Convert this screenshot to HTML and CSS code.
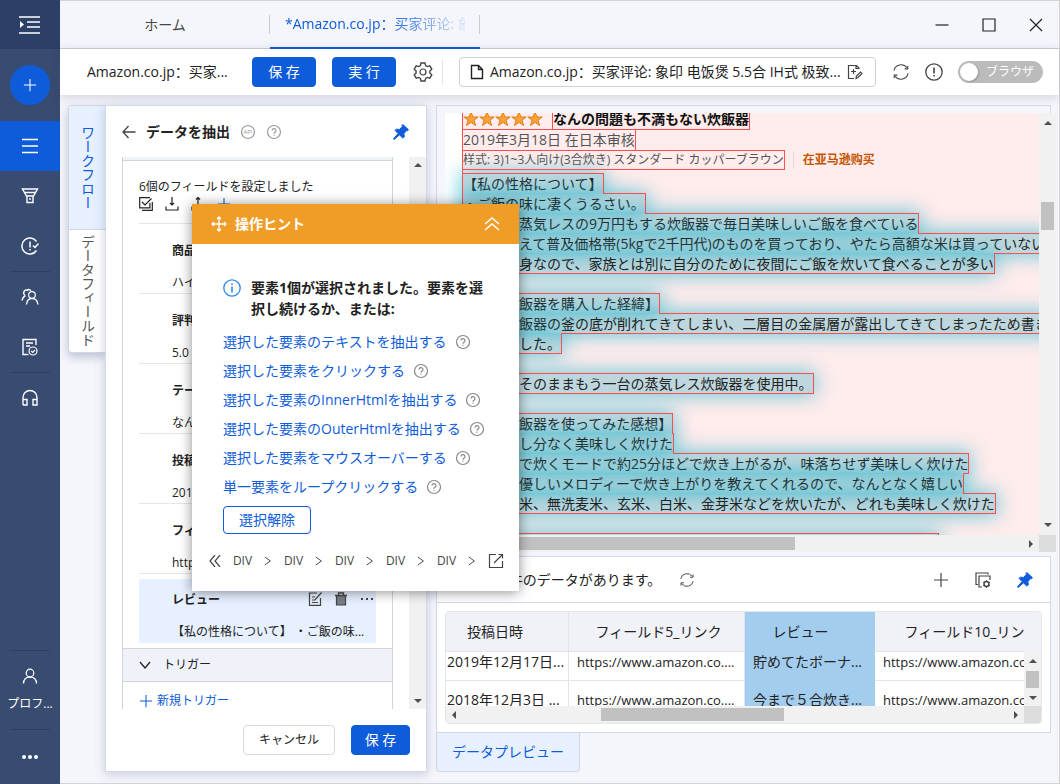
FILE: index.html
```html
<!DOCTYPE html>
<html lang="ja">
<head>
    <meta charset="UTF-8">
    <meta name="viewport" content="width=device-width, initial-scale=1.0">
    <title>データを抽出</title>
    <link rel="stylesheet" href="styles.css">
</head>
<body>
    <!-- アイコン -->
    <svg class="sprite" aria-hidden="true">
        <symbol id="i-plus" viewBox="0 0 16 16"><path d="M8 1v14M1 8h14"/></symbol>
        <symbol id="i-help" viewBox="0 0 16 16"><circle cx="8" cy="8" r="6.5"/><path d="M6 6.6a2 2 0 1 1 3 1.7c-.7.4-1 .7-1 1.4M8 10.8v1"/></symbol>
        <symbol id="i-refresh" viewBox="0 0 20 20"><path d="M2.2 8.500A8 8 0 0 1 16.500 5.300M17.800 11.500A8 8 0 0 1 3.500 14.700M17.500 3v3.500h-3.500M2.500 17v-3.500H6"/></symbol>
        <symbol id="i-pin" viewBox="0 0 16 16"><path d="M9.800.5l5.700 5.200-.9 1-1-.2-2.700 3 .4 3.300-1.500 1.300-3.300-3.200L1 15.500l-.6-.6 4.700-5.400L2 6.300l1.500-1.100 3.200.2 2.600-2.900-.3-1z" stroke-width="1"/></symbol>
        <symbol id="i-gt" viewBox="0 0 10 12"><path d="M1 1l7 5-7 5"/></symbol>
    </svg>

    <div class="app">
        <aside class="sidebar">
            <button class="side-top" aria-label="メニュー">
                <svg class="icon" width="22" height="18" viewBox="0 0 22 18"><path d="M0 1h21M8 6h13M8 11h13M0 17h21" stroke-width="1.600"/><path d="M1 5l4 3.500-4 3.500z" fill="currentColor" stroke="none"/></svg>
            </button>
            <button class="side-new" aria-label="新規"><svg class="icon" width="14" height="14"><use href="#i-plus"/></svg></button>
            <button class="side-item active" aria-label="タスク">
                <svg class="icon" width="16" height="16" viewBox="0 0 16 16"><path d="M0 1.500h16M0 8h16M0 14.500h16" stroke-width="1.500"/></svg>
            </button>
            <button class="side-item" aria-label="フィルター">
                <svg class="icon" width="18" height="18" viewBox="0 0 18 18"><path d="M1.500 2h15l-4 7h-7zM3.500 5.500h11M6 9v6.500h6V9M9 11v2" stroke-width="1.400"/></svg>
            </button>
            <button class="side-item" aria-label="スケジュール">
                <svg class="icon" width="18" height="18" viewBox="0 0 18 18"><path d="M15.500 4.500A8 8 0 1 0 15.500 13.500M9 4.500v6M9 12v1.500M12 8.500l2 2 3.500-4" stroke-width="1.500"/></svg>
            </button>
            <hr>
            <button class="side-item" aria-label="チーム">
                <svg class="icon" width="18" height="18" viewBox="0 0 18 18"><circle cx="11" cy="7" r="3.300"/><path d="M5.500 16.500c.3-4 2.500-6 5.500-6s5.500 2 6 6M7.500 2.500a3 3 0 1 0-3.500 5M1 12.500c.5-2.500 1.500-4 3.500-5M6 1.800c1.500-.8 3-.3 4 1" stroke-width="1.400"/></svg>
            </button>
            <button class="side-item" aria-label="テンプレート">
                <svg class="icon" width="18" height="18" viewBox="0 0 18 18"><path d="M15 7V1.500H2v15h5.500M5 5h7M5 8h4" stroke-width="1.400"/><circle cx="12" cy="13" r="4"/><path d="M10.200 13l1.500 1.500 2.300-2.500"/></svg>
            </button>
            <hr>
            <button class="side-item" aria-label="サポート">
                <svg class="icon" width="18" height="18" viewBox="0 0 18 18"><path d="M2 16V8.500a7 7 0 0 1 14 0V16h-4v-5.500h4M2 10.500h4V16H2" stroke-width="1.400"/></svg>
            </button>
            <div class="side-bottom">
                <hr>
                <button class="side-profile">
                    <svg class="icon" width="16" height="16" viewBox="0 0 16 16"><circle cx="8" cy="5" r="3.800"/><path d="M1.500 15.500c0-4 2.700-6.500 6.500-6.500s6.500 2.500 6.500 6.500" stroke-width="1.400"/></svg>
                    <span>プロフ...</span>
                </button>
                <hr>
                <button class="side-more" aria-label="その他"><svg width="16" height="4" viewBox="0 0 16 4" fill="#fff"><circle cx="2" cy="2" r="2"/><circle cx="8" cy="2" r="2"/><circle cx="14" cy="2" r="2"/></svg></button>
            </div>
        </aside>

        <div class="main">
            <!-- タブ -->
            <header class="tabbar">
                <a class="tab" href="#home">ホーム</a>
                <a class="tab active" href="#task"><span lang="zh-CN">*Amazon.co.jp：买家评论: 象</span></a>
                <div class="window-buttons">
                    <button aria-label="最小化"><svg class="icon" width="14" height="14" viewBox="0 0 14 14"><path d="M.5 7h13"/></svg></button>
                    <button aria-label="最大化"><svg class="icon" width="14" height="14" viewBox="0 0 14 14"><path d="M1 1h12v12H1z"/></svg></button>
                    <button aria-label="閉じる"><svg class="icon" width="14" height="14" viewBox="0 0 14 14"><path d="M1 1l12 12M13 1L1 13"/></svg></button>
                </div>
            </header>

            <!-- ツールバー -->
            <div class="toolbar">
                <span class="task-name" lang="zh-CN">Amazon.co.jp：买家...</span>
                <button class="btn primary">保 存</button>
                <button class="btn primary">実 行</button>
                <button class="icon-btn settings" aria-label="設定">
                    <svg class="icon" width="20" height="20" viewBox="0 0 20 20"><path d="M8 1h4l.6 2.600 1.700 1 2.500-.8 2 3.400-1.900 1.800v2l1.900 1.800-2 3.400-2.500-.8-1.700 1L12 19H8l-.6-2.600-1.700-1-2.500.8-2-3.400L3.100 11V9L1.200 7.200l2-3.400 2.500.8 1.700-1z" stroke-width="1.400"/><circle cx="10" cy="10" r="3"/></svg>
                </button>
                <div class="address">
                    <svg class="icon" width="14" height="16" viewBox="0 0 14 16"><path d="M1.500 1.500h7l4 4v9h-11zM8.500 1.500v4h4" stroke-width="1.400"/></svg>
                    <input type="text" lang="zh-CN" aria-label="アドレス" value="Amazon.co.jp：买家评论: 象印 电饭煲 5.5合 IH式 极致..." readonly>
                    <button class="icon-btn" aria-label="編集"><svg class="icon" width="16" height="16" viewBox="0 0 16 16"><path d="M12 5V4L9.500 1.500H1.500v13H7M9 1.500V4.500h3M4 7.500h5M6.500 5v5M9 14.500l.5-2.500 4-4 1.500 1.500-4 4z"/></svg></button>
                </div>
                <button class="icon-btn" aria-label="更新"><svg class="icon" width="18" height="18"><use href="#i-refresh"/></svg></button>
                <button class="icon-btn" aria-label="情報"><svg class="icon" width="18" height="18" viewBox="0 0 18 18"><circle cx="9" cy="9" r="8.200" stroke-width="1.300"/><path d="M9 4.500v6M9 12v1.600" stroke-width="1.600"/></svg></button>
                <label class="switch"><input type="checkbox">ブラウザ</label>
            </div>

            <div class="workspace">
                <nav class="vtabs">
                    <button class="active">ワークフロー</button>
                    <button>データフィールド</button>
                </nav>

                <!-- データ抽出パネル -->
                <section class="panel">
                    <div class="panel-head">
                        <button class="icon-btn" aria-label="戻る"><svg class="icon" width="14" height="14" viewBox="0 0 14 14"><path d="M13.500 7H1M6.500 1L1 7l5.500 6" stroke-width="1.300"/></svg></button>
                        <h2>データを抽出</h2>
                        <svg class="icon gray api" width="16" height="16" viewBox="0 0 16 16"><circle cx="8" cy="8" r="6.500"/><text x="8" y="10" text-anchor="middle">API</text></svg>
                        <svg class="icon gray" width="16" height="16"><use href="#i-help"/></svg>
                        <button class="icon-btn pin" aria-label="固定"><svg width="16" height="16"><use href="#i-pin"/></svg></button>
                    </div>
                    <div class="panel-body">
                        <div class="fields">
                            <div class="fields-inner">
                                <p>6個のフィールドを設定しました</p>
                                <div class="field-tools">
                                    <svg class="icon" width="14" height="14" viewBox="0 0 14 14"><path d="M11 .7H.7v10.200h10.200V6M3 5l3 3 6.500-6.500M3 13.300h10.300V5"/></svg>
                                    <svg class="icon" width="14" height="14" viewBox="0 0 14 14"><path d="M7 0v8M5 6l2 2 2-2M1 9.500V13h12V9.500"/></svg>
                                    <svg class="icon" width="14" height="14" viewBox="0 0 14 14"><path d="M7 9V0M5 2.500l2-2 2 2M1 9.500V13h12V9.500"/></svg>
                                    <svg class="icon blue" width="14" height="14"><use href="#i-plus"/></svg>
                                </div>
                                <div class="field"><b>商品名</b><span>ハイアール</span></div>
                                <div class="field"><b>評判</b><span>5.0 星</span></div>
                                <div class="field"><b>テーマ</b><span>なんの問題も</span></div>
                                <div class="field"><b>投稿日時</b><span>2019年3月18日</span></div>
                                <div class="field"><b>フィールド5_リンク</b><span>https://www.amazon.co.jp</span></div>
                                <div class="field selected">
                                    <b>レビュー</b>
                                    <div class="field-actions">
                                        <button class="icon-btn" aria-label="編集"><svg class="icon" width="14" height="14" viewBox="0 0 14 14"><path d="M9 1H1.500v12.300h11V6M4 8l3 0 6.500-7.500M4 5h3M4 10.500h6"/></svg></button>
                                        <button class="icon-btn" aria-label="削除"><svg class="icon" width="14" height="14" viewBox="0 0 14 14"><path d="M2.500 3.500h9V13h-9z" fill="#778089"/><path d="M1 3.500h12M4.500 3.500V1h5v2.500" stroke-width="1.300"/></svg></button>
                                        <button class="icon-btn" aria-label="その他"><svg width="14" height="4" viewBox="0 0 14 4" fill="#444"><path d="M1 1h2v2H1zM6 1h2v2H6zM11 1h2v2h-2z"/></svg></button>
                                    </div>
                                    <span>【私の性格について】 ・ご飯の味...</span>
                                </div>
                            </div>
                            <button class="trigger-head"><svg class="icon" width="12" height="8" viewBox="0 0 12 8"><path d="M1 1l5 6 5-6" stroke-width="1.300"/></svg>トリガー</button>
                            <a class="trigger-add" href="#trigger"><svg class="icon" width="14" height="14"><use href="#i-plus"/></svg>新規トリガー</a>
                        </div>
                        <div class="vscroll"><i class="up"></i><i class="down"></i></div>
                    </div>
                    <div class="panel-foot">
                        <button class="btn">キャンセル</button>
                        <button class="btn primary">保 存</button>
                    </div>
                </section>

                <div class="content">
                    <!-- ブラウザ -->
                    <section class="browser">
                        <div class="browser-view">
                            <div class="page">
                                <div class="review">
                                    <div class="review-title">
                                        <svg width="80" height="16" viewBox="0 0 80 16" fill="#ffa033" stroke="#d98328"><defs><path id="star" d="M8 1l2 5h5.200l-4.200 3.300 1.600 5.200L8 11.400l-4.600 3.100L5 9.300.8 6H6z"/></defs><use href="#star"/><use href="#star" x="16"/><use href="#star" x="32"/><use href="#star" x="48"/><use href="#star" x="64"/></svg>
                                        <b class="mark">なんの問題も不満もない炊飯器</b>
                                    </div>
                                    <div class="review-date"><span class="mark">2019年3月18日 在日本审核</span></div>
                                    <div class="review-meta"><span class="mark">样式: 3)1~3人向け(3合炊き) スタンダード カッパーブラウン</span><a href="#buy" lang="zh-CN">在亚马逊购买</a></div>
                                    <div class="review-body"><span class="outlined"><span class="glow">【私の性格について】<br>・ご飯の味に凄くうるさい。<br>・現在は蒸気レスの9万円もする炊飯器で毎日美味しいご飯を食べている<br>それに加えて普及価格帯(5kgで2千円代)のものを買っており、やたら高額な米は買っていない。<br>・私は単身なので、家族とは別に自分のために夜間にご飯を炊いて食べることが多い<br><br>【私が炊飯器を購入した経緯】<br>今まで炊飯器の釜の底が削れてきてしまい、二層目の金属層が露出してきてしまったため書き込み<br>を行いました。<br><br>現在は、そのままもう一台の蒸気レス炊飯器を使用中。<br><br>【この炊飯器を使ってみた感想】<br>・味は申し分なく美味しく炊けた<br>・お急ぎで炊くモードで約25分ほどで炊き上がるが、味落ちせず美味しく炊けた<br>・音色が優しいメロディーで炊き上がりを教えてくれるので、なんとなく嬉しい<br>・無洗精米、無洗麦米、玄米、白米、金芽米などを炊いたが、どれも美味しく炊けた<br><br>・お手入れする部品が少なく、毎日の片付けもとても簡単なのが気に入った</span></span></div>
                                </div>
                            </div>
                            <div class="vscroll"><i class="up"></i><div class="thumb"></div><i class="down"></i></div>
                            <div class="hscroll"><i class="left"></i><div class="thumb"></div><i class="right"></i></div>
                            <div class="corner"></div>
                        </div>
                    </section>

                    <!-- データプレビュー -->
                    <section class="preview">
                        <div class="preview-head">
                            <span>合計 100件のデータがあります。</span>
                            <button class="icon-btn" aria-label="更新"><svg class="icon" width="16" height="16"><use href="#i-refresh"/></svg></button>
                            <div class="preview-actions">
                                <button class="icon-btn" aria-label="追加"><svg class="icon" width="16" height="16"><use href="#i-plus"/></svg></button>
                                <button class="icon-btn" aria-label="列の設定"><svg class="icon" width="16" height="16" viewBox="0 0 16 16"><path d="M3 12.500H1V1h12v1.500M7 15H4V4h11v4"/><circle cx="11.500" cy="12" r="2.500" stroke-width="1.400"/><path d="M11.500 8.300v1.200M11.500 14.500v1.200M8.300 10.200l1 .6M13.700 13.200l1 .6M8.300 13.800l1-.6M13.700 10.800l1-.6"/></svg></button>
                                <button class="icon-btn pin" aria-label="固定"><svg width="16" height="16"><use href="#i-pin"/></svg></button>
                            </div>
                        </div>
                        <div class="grid">
                            <div class="grid-clip">
                                <table>
                                    <thead>
                                        <tr><th>投稿日時</th><th>フィールド5_リンク</th><th class="on">レビュー</th><th>フィールド10_リンク</th></tr>
                                    </thead>
                                    <tbody>
                                        <tr><td>2019年12月17日...</td><td class="url">https://www.amazon.co....</td><td class="on">貯めてたボーナ...</td><td class="url">https://www.amazon.co....</td></tr>
                                        <tr><td>2018年12月3日 ...</td><td class="url">https://www.amazon.co....</td><td class="on">今まで５合炊き...</td><td class="url">https://www.amazon.co....</td></tr>
                                    </tbody>
                                </table>
                            </div>
                            <div class="vscroll"><i class="up"></i><div class="thumb"></div><i class="down"></i></div>
                            <div class="hscroll"><i class="left"></i><div class="thumb"></div><i class="right"></i></div>
                            <div class="corner"></div>
                        </div>
                    </section>
                    <button class="preview-tab">データプレビュー</button>
                </div>
            </div>
        </div>

        <!-- 操作ヒント -->
        <div class="hint">
            <div class="hint-head">
                <svg class="icon" width="16" height="16" viewBox="0 0 16 16"><path d="M8 1v14M1 8h14M6 3l2-2 2 2M6 13l2 2 2-2M3 6L1 8l2 2M13 6l2 2-2 2" stroke-width="1.300"/></svg>
                <b>操作ヒント</b>
                <button class="icon-btn" aria-label="折りたたむ"><svg class="icon" width="16" height="14" viewBox="0 0 16 14"><path d="M1 7l7-6 7 6M1 13l7-6 7 6" stroke-width="1.500"/></svg></button>
            </div>
            <div class="hint-body">
                <div class="hint-title">
                    <svg class="icon" width="18" height="18" viewBox="0 0 18 18"><circle cx="9" cy="9" r="8.200" stroke-width="1.300"/><path d="M9 4.500V6M9 7.500v6" stroke-width="1.600"/></svg>
                    <b>要素1個が選択されました。要素を選択し続けるか、または:</b>
                </div>
                <ul>
                    <li><a href="#text">選択した要素のテキストを抽出する</a><svg class="icon" width="16" height="16"><use href="#i-help"/></svg></li>
                    <li><a href="#click">選択した要素をクリックする</a><svg class="icon" width="16" height="16"><use href="#i-help"/></svg></li>
                    <li><a href="#inner">選択した要素のInnerHtmlを抽出する</a><svg class="icon" width="16" height="16"><use href="#i-help"/></svg></li>
                    <li><a href="#outer">選択した要素のOuterHtmlを抽出する</a><svg class="icon" width="16" height="16"><use href="#i-help"/></svg></li>
                    <li><a href="#hover">選択した要素をマウスオーバーする</a><svg class="icon" width="16" height="16"><use href="#i-help"/></svg></li>
                    <li><a href="#loop">単一要素をループクリックする</a><svg class="icon" width="16" height="16"><use href="#i-help"/></svg></li>
                </ul>
                <button class="btn outline">選択解除</button>
            </div>
            <div class="hint-path">
                <svg class="icon" width="12" height="12" viewBox="0 0 12 12"><path d="M6 0L1 6l5 6M11 0L6 6l5 6" stroke-width="1.200"/></svg>
                <span>DIV</span><svg class="icon" width="8" height="12"><use href="#i-gt"/></svg>
                <span>DIV</span><svg class="icon" width="8" height="12"><use href="#i-gt"/></svg>
                <span>DIV</span><svg class="icon" width="8" height="12"><use href="#i-gt"/></svg>
                <span>DIV</span><svg class="icon" width="8" height="12"><use href="#i-gt"/></svg>
                <span>DIV</span><svg class="icon" width="8" height="12"><use href="#i-gt"/></svg>
                <svg class="icon" width="16" height="16" viewBox="0 0 16 16"><path d="M8 1.500H1.500v13h13V8M6 10l8.500-8.500M10.500 1.500h4v4"/></svg>
            </div>
        </div>
    </div>
</body>
</html>
```

FILE: styles.css
```css
* {
    box-sizing: border-box;
}

body {
    margin: 0;
    font-family: "Open Sans", "Noto Sans CJK JP", "Noto Sans CJK SC", sans-serif;
    font-size: 14px;
    line-height: 20px;
    color: #222;
    background: #f5f6fc;
}

button,
input {
    font: inherit;
    color: inherit;
    padding: 0;
    border: none;
    background: none;
}

[lang="zh-CN"] {
    font-family: "Open Sans", "Noto Sans CJK SC", sans-serif;
}

button {
    cursor: pointer;
}

a {
    text-decoration: none;
}

h2,
p,
ul {
    margin: 0;
    padding: 0;
    font-size: 14px;
    list-style: none;
}

.sprite {
    position: absolute;
    width: 0;
    height: 0;
}

.icon {
    flex: none;
    fill: none;
    stroke: currentColor;
    stroke-width: 1.2;
    display: block;
}

.icon-btn {
    display: flex;
    align-items: center;
    justify-content: center;
    color: #444;
}

.pin {
    fill: #0f5cdb;
    stroke: #0f5cdb;
}

.gray {
    color: #999;
}

.api text {
    font-size: 6px;
    fill: #999;
    stroke: none;
}

.btn {
    height: 30px;
    padding: 0 15px;
    border-radius: 4px;
    border: 1px solid #d9d9d9;
    background: #fff;
    white-space: nowrap;
}

.btn.primary {
    background: #0f5cdb;
    border-color: #0f5cdb;
    color: #fff;
}

.btn.outline {
    height: 28px;
    border-color: #0f5cdb;
    color: #0f5cdb;
}

.app {
    position: relative;
    display: flex;
    min-height: 100vh;
}

/* サイドバー */
.sidebar {
    flex: none;
    width: 60px;
    display: flex;
    flex-direction: column;
    background: #384b70;
    color: #fff;
}

.sidebar button {
    display: flex;
    align-items: center;
    justify-content: center;
}

.sidebar hr {
    width: 40px;
    margin: 0 auto;
    border: none;
    border-top: 1px solid #2c3f68;
}

.sidebar .side-top {
    height: 49px;
    background: #2c3f68;
}

.sidebar .side-new {
    width: 40px;
    height: 40px;
    margin: 16px auto;
    border-radius: 50%;
    background: #0f5cdb;
}

.side-item {
    height: 50px;
}

.side-item.active {
    background: #0f5cdb;
}

.side-bottom {
    margin-top: auto;
    font-size: 12px;
}

.side-profile {
    width: 60px;
    height: 78px;
    padding-top: 2px;
    flex-direction: column;
    gap: 10px;
}

.side-more {
    width: 60px;
    height: 54px;
}

/* メイン */
.main {
    flex: 1;
    min-width: 0;
    display: flex;
    flex-direction: column;
    border: 1px solid #d4d4d6;
    border-left: none;
}

.tabbar {
    height: 48px;
    display: flex;
    align-items: center;
    border-bottom: 1px solid #cfcfd2;
}

.tab {
    width: 210px;
    height: 47px;
    display: flex;
    align-items: center;
    justify-content: center;
    color: #444;
    background: linear-gradient(#ccc, #ccc) no-repeat right 14px / 1px 19px;
}

.tab.active {
    height: 48px;
    border-bottom: 2px solid #0f5cdb;
    color: #0f5cdb;
}

.tab span {
    width: 180px;
    overflow: hidden;
    white-space: nowrap;
    -webkit-mask-image: linear-gradient(to right, #000 55%, transparent 105%);
    mask-image: linear-gradient(to right, #000 55%, transparent 105%);
}

.window-buttons {
    margin-left: auto;
    display: flex;
    gap: 33px;
    padding-right: 16px;
}

.toolbar {
    position: relative;
    height: 46px;
    padding: 0 16px 0 27px;
    display: flex;
    align-items: center;
    background: #fff;
    box-shadow: 0 2px 10px rgba(60, 60, 90, 0.2);
}

.task-name {
    width: 165px;
    white-space: nowrap;
}

.toolbar .btn {
    width: 64px;
    margin-right: 16px;
}

.settings {
    padding: 2px 9px 2px 1px;
    margin-right: 16px;
    border-right: 1px solid #e4e4e8;
}

.address {
    flex: 1;
    height: 30px;
    padding: 0 12px 0 10px;
    margin-right: 16px;
    display: flex;
    align-items: center;
    gap: 6px;
    border: 1px solid #d0d0d4;
    border-radius: 4px;
}

.address input {
    flex: 1;
    min-width: 0;
    text-overflow: ellipsis;
    outline: none;
}

.toolbar > .icon-btn:not(.settings) {
    margin-right: 15px;
}

.switch {
    display: flex;
    align-items: center;
    width: 85px;
    height: 22px;
    border-radius: 11px;
    background: #bbb;
    color: #fff;
    font-size: 12px;
}

.switch input {
    appearance: none;
    width: 18px;
    height: 18px;
    margin: 0 8px 0 2px;
    border-radius: 50%;
    background: #fff;
    box-shadow: 1px 1px 2px rgba(0, 0, 0, 0.2);
}

.workspace {
    flex: 1;
    display: flex;
    align-items: flex-start;
    padding: 10px 8px 11px;
}

.vtabs {
    flex: none;
    width: 37px;
    display: flex;
    flex-direction: column;
    border: 1px solid #d0d6e6;
    border-right: none;
    border-radius: 4px 0 0 4px;
    background: #fff;
    box-shadow: 0 4px 10px rgba(60, 70, 110, 0.3);
}

.vtabs button {
    height: 122px;
    writing-mode: vertical-rl;
    line-height: 36px;
    color: #555;
}

.vtabs .active {
    height: 124px;
    background: #e6f0ff;
    color: #0f5cdb;
    border-bottom: 1px solid #d0d6e6;
}

/* 抽出パネル */
.panel {
    position: relative;
    flex: none;
    width: 322px;
    background: #fff;
    border: 1px solid #d4dae8;
    box-shadow: 0 2px 10px rgba(60, 70, 110, 0.25);
}

.panel-head {
    height: 51px;
    padding: 0 17px 0 16px;
    display: flex;
    align-items: center;
    gap: 10px;
}

.panel-head .pin {
    margin-left: auto;
}

.panel-body {
    height: 552px;
    display: flex;
    justify-content: space-between;
    padding-left: 16px;
    overflow: hidden;
}

.fields {
    width: 271px;
    padding-top: 3px;
    border: solid #d4d4d8;
    border-width: 0 1px;
    background: linear-gradient(#f0f2f9, #f0f2f9) no-repeat top / 100% 3px;
    font-size: 12px;
}

.fields-inner {
    padding: 16px 16px 5px;
    border-top: 1px solid #d4d4d8;
}

.fields-inner p {
    font-size: 12px;
}

.field-tools {
    display: flex;
    gap: 12px;
    padding-bottom: 12px;
    border-bottom: 1px solid #e4e6ec;
}

.field {
    height: 70px;
    padding: 17px 0 0 33px;
    display: flex;
    flex-direction: column;
    gap: 12px;
    overflow: hidden;
    white-space: nowrap;
    border-bottom: 1px solid #e4e6ec;
}

.field.selected {
    position: relative;
    height: 64px;
    margin-top: 5px;
    padding-top: 11px;
    background: #e6f0ff;
    border: none;
}

.field-actions {
    position: absolute;
    top: 13px;
    right: 2px;
    display: flex;
    gap: 12px;
}

.trigger-head {
    width: 100%;
    height: 34px;
    padding-left: 16px;
    display: flex;
    align-items: center;
    gap: 12px;
    background: #f0f2fa;
    border: solid #d4d4d8;
    border-width: 1px 0;
}

.trigger-add {
    display: flex;
    align-items: center;
    gap: 4px;
    padding: 9px 16px;
    color: #0f5cdb;
}

.blue {
    color: #0f5cdb;
}

.panel-foot {
    display: flex;
    justify-content: flex-end;
    gap: 16px;
    padding: 16px;
}

.panel-foot .btn:first-child {
    font-size: 12px;
}

.panel-foot .primary {
    width: 59px;
    padding: 0;
}

/* スクロールバー */
.vscroll,
.hscroll {
    display: flex;
    align-items: center;
    justify-content: space-between;
    background: #f1f1f1;
}

.vscroll {
    flex-direction: column;
    width: 17px;
    padding: 6px 0;
}

.hscroll {
    height: 17px;
    padding: 0 6px;
}

.vscroll i,
.hscroll i {
    border: 4px solid transparent;
}

.vscroll .up {
    border-top: none;
    border-bottom-color: #505050;
}

.vscroll .down {
    border-bottom: none;
    border-top-color: #505050;
}

.hscroll .left {
    border-left: none;
    border-right-color: #505050;
}

.hscroll .right {
    border-right: none;
    border-left-color: #505050;
}

.thumb {
    background: #c1c1c1;
}

.vscroll .thumb {
    width: 13px;
}

.hscroll .thumb {
    height: 13px;
}

.corner {
    background: #dcdcdc;
}

/* 右側 */
.content {
    flex: 1;
    min-width: 0;
    margin-left: 9px;
}

.browser {
    padding: 7px 0 0 8px;
    border: 1px solid #d4d8e8;
    border-bottom: none;
}

.browser-view {
    display: grid;
    grid-template-columns: 1fr 17px;
    grid-template-rows: 422px 17px;
    margin-right: -6px;
}

.browser-view .vscroll .thumb {
    height: 28px;
    margin-bottom: 216px;
}

.browser-view .hscroll .thumb {
    width: 300px;
    margin-left: auto;
    margin-right: 234px;
}

.browser-view .vscroll {
    padding: 8px 0;
}

.page {
    min-width: 0;
    padding-left: 17px;
    overflow: hidden;
    background: #fff;
}

.review {
    position: relative;
    z-index: 0;
    margin-top: -4px;
    white-space: nowrap;
    background: #ffecec;
    border-left: 1px solid #ff4d4f;
}

.mark {
    outline: 1px solid #ff4d4f;
}

.review-title {
    height: 20px;
    display: flex;
    align-items: center;
    gap: 10px;
    color: #111;
}

.review-date {
    height: 22px;
    padding-top: 1px;
    color: #555;
}

.review-date .mark {
    display: inline-block;
}

.review-meta {
    height: 23px;
    display: flex;
    align-items: flex-start;
    font-size: 12px;
    line-height: 18px;
    color: #555;
}

.review-meta a {
    margin-left: 9px;
    padding-left: 9px;
    border-left: 1px solid #ddd;
    color: #c45500;
    font-weight: bold;
}

/* 枠線は光の上に描く */
.outlined {
    position: relative;
    outline: 1px solid #ff4d4f;
}

.glow {
    position: relative;
    z-index: -1;
    background: rgba(20, 160, 185, 0.28);
    box-shadow: 0 0 20px 2px rgba(20, 180, 205, 0.65);
    -webkit-box-decoration-break: clone;
    box-decoration-break: clone;
}

.preview {
    margin-top: 4px;
    background: #fff;
    border: 1px solid #d4d8e8;
}

.preview-head {
    height: 46px;
    padding: 0 17px 0 16px;
    display: flex;
    align-items: center;
    gap: 18px;
    border-bottom: 1px solid #d4d8e8;
}

.preview-actions {
    margin-left: auto;
    display: flex;
    gap: 26px;
}

.grid {
    display: grid;
    grid-template-columns: 1fr 17px;
    grid-template-rows: 94px 17px;
    margin: 8px;
    border: 1px solid #e4e6ec;
    border-radius: 4px;
    overflow: hidden;
}

.grid-clip {
    overflow: hidden;
}

.grid table {
    width: 619px;
    table-layout: fixed;
    border-collapse: separate;
    border-spacing: 0;
}

.grid th {
    width: 176px;
    height: 40px;
    padding: 0 0 0 4px;
    font-weight: normal;
    background: #f0f2f8;
    border: solid #e2e4ea;
    border-width: 0 1px 1px 0;
}

.grid th:first-child {
    width: 123px;
    padding: 0 24px 0 0;
}

.grid th.on {
    width: 130px;
    padding: 0 18px 0 0;
}

.grid th:last-child {
    width: 190px;
}

.grid td {
    height: 39px;
    padding: 0 0 0 8px;
    border: solid #e2e4ea;
    border-width: 0 1px 1px 0;
    overflow: hidden;
    white-space: nowrap;
}

.grid td:first-child {
    padding-left: 1px;
}

.grid tr:first-child td {
    height: 29px;
    padding-bottom: 8px;
}

.grid .url {
    font-size: 13px;
}

.grid .on {
    background: #a2cdee;
    border-color: #a2cdee;
}

.grid .vscroll {
    border-top: 41px solid #f0f2f8;
}

.grid .vscroll .thumb {
    height: 17px;
}

.grid .hscroll .thumb {
    width: 183px;
    margin-left: 145px;
    margin-right: auto;
}

.preview-tab {
    height: 39px;
    padding: 0 15px;
    background: #e6f0ff;
    border: 1px solid #d0d6e6;
    border-top: none;
    border-radius: 0 0 4px 4px;
    color: #0f5cdb;
}

/* 操作ヒント */
.hint {
    position: absolute;
    left: 192px;
    top: 204px;
    width: 327px;
    background: #fff;
    box-shadow: 0 1px 12px rgba(0, 0, 0, 0.45);
}

.hint-head {
    height: 40px;
    padding: 0 19px;
    display: flex;
    align-items: center;
    gap: 8px;
    background: #f09d28;
    color: #fff;
}

.hint-head .icon-btn {
    margin-left: auto;
    color: #fff;
}

.hint-body {
    padding: 33px 31px 6px;
}

.hint-title {
    display: flex;
    gap: 10px;
    line-height: 21px;
    padding-bottom: 8px;
}

.hint-title .icon {
    margin-top: 2px;
    color: #2e86f0;
}

.hint-body li {
    height: 29px;
    display: flex;
    align-items: center;
    gap: 8px;
    color: #888;
}

.hint-body li a {
    color: #0f5cdb;
}

.hint-body .btn {
    margin-top: 5px;
}

.hint-path {
    height: 51px;
    padding: 0 15px 10px 17px;
    display: flex;
    align-items: center;
    justify-content: space-between;
    font-size: 12px;
    color: #444;
}
```
